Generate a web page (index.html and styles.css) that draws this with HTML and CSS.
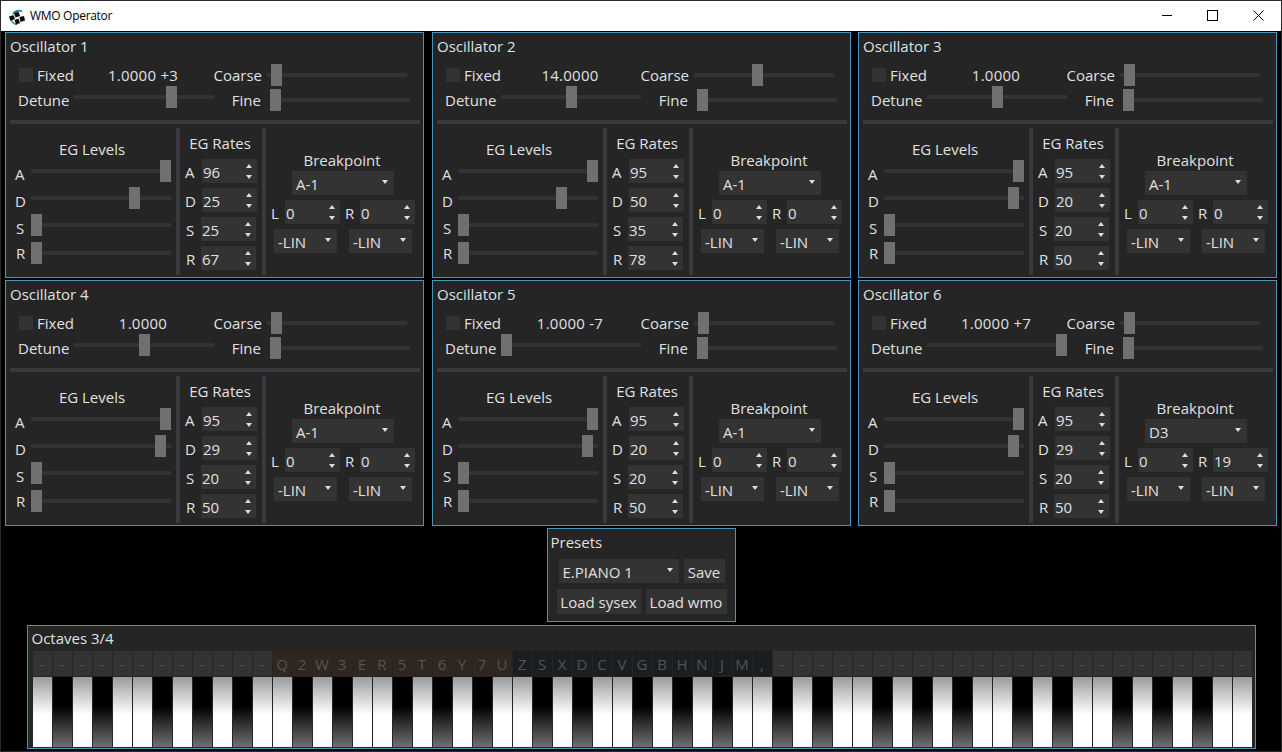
FILE: index.html
```html
<!DOCTYPE html>
<html lang="en">
<head>
<meta charset="utf-8">
<title>WMO Operator</title>
<link rel="stylesheet" href="styles.css">
</head>
<body>
<div class="app">
  <header class="titlebar">
    <svg class="logo" width="16" height="16" viewBox="0 0 16 16"><path d="M4 5A6.500 6.500 0 0 1 13 2.500" fill="none" stroke="#2f7fb5" stroke-width="1.800"/><path d="M2.500 11.500A6.500 6.500 0 0 0 8 15.500" fill="none" stroke="#2f7fb5" stroke-width="1.600"/><path d="M0 7.500l4.500-1.500 1.500 4-4.500 2zM5 4l4.500-1.500 1.500 4.500-4.500 1.500zM10.500 8l4.500-1 1 4.500-4.500 1.500zM5.500 11l4-1.500 1.500 4.500-4 1.500z" fill="#0c0c0c"/></svg>
    <span class="apptitle">WMO Operator</span>
    <div class="winbtns">
      <div class="winbtn"><svg width="11" height="11" viewBox="0 0 11 11"><path d="M1 5.500h10" stroke="#000"/></svg></div>
      <div class="winbtn"><svg width="11" height="11" viewBox="0 0 11 11"><rect x=".5" y=".5" width="10" height="10" fill="none" stroke="#000"/></svg></div>
      <div class="winbtn"><svg width="11" height="11" viewBox="0 0 11 11"><path d="M.5 .5l10 10M10.500 .5l-10 10" stroke="#000"/></svg></div>
    </div>
  </header>
  <main class="main">
    <section class="oscs">

      <div class="panel osc">
        <div class="ptitle">Oscillator 1</div>
        <div class="row r1"><i class="cb"></i><span class="fixed">Fixed</span><span class="val">1.0000 +3</span><span class="lc">Coarse</span><div class="sl ml5"><b class="th" style="left:4px"></b></div></div>
        <div class="row r2"><span class="ld">Detune</span><div class="sl ml6"><b class="th" style="left:92px"></b></div><span class="lf">Fine</span><div class="sl sf"><b class="th" style="left:0"></b></div></div>
        <div class="hsep"></div>
        <div class="lower">
          <div class="levels">
            <div class="ltitle">EG Levels</div>
            <div class="lv"><span class="ll">A</span><div class="sl"><b class="th" style="left:129px"></b></div></div>
            <div class="lv"><span class="ll">D</span><div class="sl"><b class="th" style="left:98px"></b></div></div>
            <div class="lv"><span class="ll sx">S</span><div class="sl"><b class="th" style="left:0"></b></div></div>
            <div class="lv lr"><span class="ll sx">R</span><div class="sl"><b class="th" style="left:0"></b></div></div>
          </div>
          <div class="vsep"></div>
          <div class="rates">
            <div class="rtitle">EG Rates</div>
            <div class="rr"><span class="rl">A</span><div class="spin"><span>96</span></div></div>
            <div class="rr"><span class="rl">D</span><div class="spin"><span>25</span></div></div>
            <div class="rr"><span class="rl rn">S</span><div class="spin"><span>25</span></div></div>
            <div class="rr"><span class="rl rn">R</span><div class="spin"><span>67</span></div></div>
          </div>
          <div class="vsep"></div>
          <div class="bp">
            <div class="btitle">Breakpoint</div>
            <div class="combo cnote"><span>A-1</span></div>
            <div class="bl"><span class="bll">L</span><div class="spin"><span>0</span></div><span class="blr">R</span><div class="spin"><span>0</span></div></div>
            <div class="bc"><div class="combo clin"><span>-LIN</span></div><div class="combo clin"><span>-LIN</span></div></div>
          </div>
        </div>
      </div>

      <div class="panel osc">
        <div class="ptitle">Oscillator 2</div>
        <div class="row r1"><i class="cb"></i><span class="fixed">Fixed</span><span class="val">14.0000</span><span class="lc">Coarse</span><div class="sl ml5"><b class="th" style="left:58px"></b></div></div>
        <div class="row r2"><span class="ld">Detune</span><div class="sl ml6"><b class="th" style="left:65px"></b></div><span class="lf">Fine</span><div class="sl sf"><b class="th" style="left:0"></b></div></div>
        <div class="hsep"></div>
        <div class="lower">
          <div class="levels">
            <div class="ltitle">EG Levels</div>
            <div class="lv"><span class="ll">A</span><div class="sl"><b class="th" style="left:129px"></b></div></div>
            <div class="lv"><span class="ll">D</span><div class="sl"><b class="th" style="left:98px"></b></div></div>
            <div class="lv"><span class="ll sx">S</span><div class="sl"><b class="th" style="left:0"></b></div></div>
            <div class="lv lr"><span class="ll sx">R</span><div class="sl"><b class="th" style="left:0"></b></div></div>
          </div>
          <div class="vsep"></div>
          <div class="rates">
            <div class="rtitle">EG Rates</div>
            <div class="rr"><span class="rl">A</span><div class="spin"><span>95</span></div></div>
            <div class="rr"><span class="rl">D</span><div class="spin"><span>50</span></div></div>
            <div class="rr"><span class="rl rn">S</span><div class="spin"><span>35</span></div></div>
            <div class="rr"><span class="rl rn">R</span><div class="spin"><span>78</span></div></div>
          </div>
          <div class="vsep"></div>
          <div class="bp">
            <div class="btitle">Breakpoint</div>
            <div class="combo cnote"><span>A-1</span></div>
            <div class="bl"><span class="bll">L</span><div class="spin"><span>0</span></div><span class="blr">R</span><div class="spin"><span>0</span></div></div>
            <div class="bc"><div class="combo clin"><span>-LIN</span></div><div class="combo clin"><span>-LIN</span></div></div>
          </div>
        </div>
      </div>

      <div class="panel osc">
        <div class="ptitle">Oscillator 3</div>
        <div class="row r1"><i class="cb"></i><span class="fixed">Fixed</span><span class="val">1.0000</span><span class="lc">Coarse</span><div class="sl ml5"><b class="th" style="left:4px"></b></div></div>
        <div class="row r2"><span class="ld">Detune</span><div class="sl ml6"><b class="th" style="left:65px"></b></div><span class="lf">Fine</span><div class="sl sf"><b class="th" style="left:0"></b></div></div>
        <div class="hsep"></div>
        <div class="lower">
          <div class="levels">
            <div class="ltitle">EG Levels</div>
            <div class="lv"><span class="ll">A</span><div class="sl"><b class="th" style="left:129px"></b></div></div>
            <div class="lv"><span class="ll">D</span><div class="sl"><b class="th" style="left:124px"></b></div></div>
            <div class="lv"><span class="ll sx">S</span><div class="sl"><b class="th" style="left:0"></b></div></div>
            <div class="lv lr"><span class="ll sx">R</span><div class="sl"><b class="th" style="left:0"></b></div></div>
          </div>
          <div class="vsep"></div>
          <div class="rates">
            <div class="rtitle">EG Rates</div>
            <div class="rr"><span class="rl">A</span><div class="spin"><span>95</span></div></div>
            <div class="rr"><span class="rl">D</span><div class="spin"><span>20</span></div></div>
            <div class="rr"><span class="rl rn">S</span><div class="spin"><span>20</span></div></div>
            <div class="rr"><span class="rl rn">R</span><div class="spin"><span>50</span></div></div>
          </div>
          <div class="vsep"></div>
          <div class="bp">
            <div class="btitle">Breakpoint</div>
            <div class="combo cnote"><span>A-1</span></div>
            <div class="bl"><span class="bll">L</span><div class="spin"><span>0</span></div><span class="blr">R</span><div class="spin"><span>0</span></div></div>
            <div class="bc"><div class="combo clin"><span>-LIN</span></div><div class="combo clin"><span>-LIN</span></div></div>
          </div>
        </div>
      </div>

      <div class="panel osc">
        <div class="ptitle">Oscillator 4</div>
        <div class="row r1"><i class="cb"></i><span class="fixed">Fixed</span><span class="val">1.0000</span><span class="lc">Coarse</span><div class="sl ml5"><b class="th" style="left:4px"></b></div></div>
        <div class="row r2"><span class="ld">Detune</span><div class="sl ml6"><b class="th" style="left:65px"></b></div><span class="lf">Fine</span><div class="sl sf"><b class="th" style="left:0"></b></div></div>
        <div class="hsep"></div>
        <div class="lower">
          <div class="levels">
            <div class="ltitle">EG Levels</div>
            <div class="lv"><span class="ll">A</span><div class="sl"><b class="th" style="left:129px"></b></div></div>
            <div class="lv"><span class="ll">D</span><div class="sl"><b class="th" style="left:124px"></b></div></div>
            <div class="lv"><span class="ll sx">S</span><div class="sl"><b class="th" style="left:0"></b></div></div>
            <div class="lv lr"><span class="ll sx">R</span><div class="sl"><b class="th" style="left:0"></b></div></div>
          </div>
          <div class="vsep"></div>
          <div class="rates">
            <div class="rtitle">EG Rates</div>
            <div class="rr"><span class="rl">A</span><div class="spin"><span>95</span></div></div>
            <div class="rr"><span class="rl">D</span><div class="spin"><span>29</span></div></div>
            <div class="rr"><span class="rl rn">S</span><div class="spin"><span>20</span></div></div>
            <div class="rr"><span class="rl rn">R</span><div class="spin"><span>50</span></div></div>
          </div>
          <div class="vsep"></div>
          <div class="bp">
            <div class="btitle">Breakpoint</div>
            <div class="combo cnote"><span>A-1</span></div>
            <div class="bl"><span class="bll">L</span><div class="spin"><span>0</span></div><span class="blr">R</span><div class="spin"><span>0</span></div></div>
            <div class="bc"><div class="combo clin"><span>-LIN</span></div><div class="combo clin"><span>-LIN</span></div></div>
          </div>
        </div>
      </div>

      <div class="panel osc">
        <div class="ptitle">Oscillator 5</div>
        <div class="row r1"><i class="cb"></i><span class="fixed">Fixed</span><span class="val">1.0000 -7</span><span class="lc">Coarse</span><div class="sl ml5"><b class="th" style="left:4px"></b></div></div>
        <div class="row r2"><span class="ld">Detune</span><div class="sl ml6"><b class="th" style="left:0"></b></div><span class="lf">Fine</span><div class="sl sf"><b class="th" style="left:0"></b></div></div>
        <div class="hsep"></div>
        <div class="lower">
          <div class="levels">
            <div class="ltitle">EG Levels</div>
            <div class="lv"><span class="ll">A</span><div class="sl"><b class="th" style="left:129px"></b></div></div>
            <div class="lv"><span class="ll">D</span><div class="sl"><b class="th" style="left:124px"></b></div></div>
            <div class="lv"><span class="ll sx">S</span><div class="sl"><b class="th" style="left:0"></b></div></div>
            <div class="lv lr"><span class="ll sx">R</span><div class="sl"><b class="th" style="left:0"></b></div></div>
          </div>
          <div class="vsep"></div>
          <div class="rates">
            <div class="rtitle">EG Rates</div>
            <div class="rr"><span class="rl">A</span><div class="spin"><span>95</span></div></div>
            <div class="rr"><span class="rl">D</span><div class="spin"><span>20</span></div></div>
            <div class="rr"><span class="rl rn">S</span><div class="spin"><span>20</span></div></div>
            <div class="rr"><span class="rl rn">R</span><div class="spin"><span>50</span></div></div>
          </div>
          <div class="vsep"></div>
          <div class="bp">
            <div class="btitle">Breakpoint</div>
            <div class="combo cnote"><span>A-1</span></div>
            <div class="bl"><span class="bll">L</span><div class="spin"><span>0</span></div><span class="blr">R</span><div class="spin"><span>0</span></div></div>
            <div class="bc"><div class="combo clin"><span>-LIN</span></div><div class="combo clin"><span>-LIN</span></div></div>
          </div>
        </div>
      </div>

      <div class="panel osc">
        <div class="ptitle">Oscillator 6</div>
        <div class="row r1"><i class="cb"></i><span class="fixed">Fixed</span><span class="val">1.0000 +7</span><span class="lc">Coarse</span><div class="sl ml5"><b class="th" style="left:4px"></b></div></div>
        <div class="row r2"><span class="ld">Detune</span><div class="sl ml6"><b class="th" style="left:129px"></b></div><span class="lf">Fine</span><div class="sl sf"><b class="th" style="left:0"></b></div></div>
        <div class="hsep"></div>
        <div class="lower">
          <div class="levels">
            <div class="ltitle">EG Levels</div>
            <div class="lv"><span class="ll">A</span><div class="sl"><b class="th" style="left:129px"></b></div></div>
            <div class="lv"><span class="ll">D</span><div class="sl"><b class="th" style="left:124px"></b></div></div>
            <div class="lv"><span class="ll sx">S</span><div class="sl"><b class="th" style="left:0"></b></div></div>
            <div class="lv lr"><span class="ll sx">R</span><div class="sl"><b class="th" style="left:0"></b></div></div>
          </div>
          <div class="vsep"></div>
          <div class="rates">
            <div class="rtitle">EG Rates</div>
            <div class="rr"><span class="rl">A</span><div class="spin"><span>95</span></div></div>
            <div class="rr"><span class="rl">D</span><div class="spin"><span>29</span></div></div>
            <div class="rr"><span class="rl rn">S</span><div class="spin"><span>20</span></div></div>
            <div class="rr"><span class="rl rn">R</span><div class="spin"><span>50</span></div></div>
          </div>
          <div class="vsep"></div>
          <div class="bp">
            <div class="btitle">Breakpoint</div>
            <div class="combo cnote"><span>D3</span></div>
            <div class="bl"><span class="bll">L</span><div class="spin"><span>0</span></div><span class="blr">R</span><div class="spin"><span>19</span></div></div>
            <div class="bc"><div class="combo clin"><span>-LIN</span></div><div class="combo clin"><span>-LIN</span></div></div>
          </div>
        </div>
      </div>

    </section>

    <section class="panel presets">
      <div class="ptitle">Presets</div>
      <div class="prow1"><div class="combo cpreset"><span>E.PIANO 1</span></div><div class="btn bsave">Save</div></div>
      <div class="prow2"><div class="btn bsys">Load sysex</div><div class="btn bwmo">Load wmo</div></div>
    </section>

    <section class="panel kbd">
      <div class="ptitle">Octaves 3/4</div>
      <div class="keys">
        <div class="key w"><span>-</span></div><div class="key b"><span>-</span></div><div class="key w"><span>-</span></div><div class="key b"><span>-</span></div><div class="key w"><span>-</span></div><div class="key w"><span>-</span></div><div class="key b"><span>-</span></div><div class="key w"><span>-</span></div><div class="key b"><span>-</span></div><div class="key w"><span>-</span></div><div class="key b"><span>-</span></div><div class="key w"><span>-</span></div>
        <div class="key w lo"><span>Q</span></div><div class="key b lo"><span>2</span></div><div class="key w lo"><span>W</span></div><div class="key b lo"><span>3</span></div><div class="key w lo"><span>E</span></div><div class="key w lo"><span>R</span></div><div class="key b lo"><span>5</span></div><div class="key w lo"><span>T</span></div><div class="key b lo"><span>6</span></div><div class="key w lo"><span>Y</span></div><div class="key b lo"><span>7</span></div><div class="key w lo"><span>U</span></div>
        <div class="key w hi"><span>Z</span></div><div class="key b hi"><span>S</span></div><div class="key w hi"><span>X</span></div><div class="key b hi"><span>D</span></div><div class="key w hi"><span>C</span></div><div class="key w hi"><span>V</span></div><div class="key b hi"><span>G</span></div><div class="key w hi"><span>B</span></div><div class="key b hi"><span>H</span></div><div class="key w hi"><span>N</span></div><div class="key b hi"><span>J</span></div><div class="key w hi"><span>M</span></div><div class="key w hi"><span>,</span></div>
        <div class="key b"><span>-</span></div><div class="key w"><span>-</span></div><div class="key b"><span>-</span></div><div class="key w"><span>-</span></div><div class="key w"><span>-</span></div><div class="key b"><span>-</span></div><div class="key w"><span>-</span></div><div class="key b"><span>-</span></div><div class="key w"><span>-</span></div><div class="key b"><span>-</span></div><div class="key w"><span>-</span></div>
        <div class="key w"><span>-</span></div><div class="key b"><span>-</span></div><div class="key w"><span>-</span></div><div class="key b"><span>-</span></div><div class="key w"><span>-</span></div><div class="key w"><span>-</span></div><div class="key b"><span>-</span></div><div class="key w"><span>-</span></div><div class="key b"><span>-</span></div><div class="key w"><span>-</span></div><div class="key b"><span>-</span></div><div class="key w"><span>-</span></div>
        <div class="key w"><span>-</span></div>
      </div>
    </section>
  </main>
</div>
</body>
</html>
```

FILE: styles.css
```css
* { box-sizing: border-box; }
html, body { margin: 0; padding: 0; background: #000; }
body { font: 15px/20px "Open Sans", sans-serif; color: #e0e0e0; }

.app { width: 1282px; height: 752px; border: 1px solid #2b2b2b; overflow: hidden; background: #000; display: flex; flex-direction: column; }

.titlebar { height: 30px; flex: none; background: #fff; display: flex; align-items: center; padding-left: 8px; color: #000; }
.logo { flex: none; margin-top: 1px; }
.apptitle { font: 12px/16px "Open Sans", sans-serif; letter-spacing: -.3px; margin-left: 5px; }
.winbtns { margin-left: auto; display: flex; }
.winbtn { width: 46px; height: 30px; padding: 9px 0 0 18px; }
.winbtn svg { display: block; }

.main { flex: 1; display: flex; flex-direction: column; padding-top: 1px; }

.panel { background: #252525; border: 1px solid #4a94c0; }
.oscs { display: grid; grid-template-columns: 427px 426px 419px; grid-auto-rows: 246px; row-gap: 2px; padding-left: 4px; }
.osc { width: 419px; padding: 0 3px 0 4px; }
.ptitle { height: 25px; line-height: 25px; }
.osc .ptitle { height: 31px; line-height: 27px; }

.row { display: flex; align-items: flex-start; height: 22px; }
.r2 { height: 25px; }
.cb { width: 14px; height: 14px; margin: 4px 0 0 9px; background: #333; flex: none; }
.fixed { margin-left: 4px; width: 46px; line-height: 22px; flex: none; }
.val { width: 120px; text-align: center; line-height: 22px; letter-spacing: .25px; flex: none; }
.lc { width: 59px; text-align: right; line-height: 22px; flex: none; }
.ld { width: 58px; padding-left: 8px; line-height: 28px; flex: none; }
.lf { width: 47px; text-align: right; line-height: 28px; flex: none; }

.sl { position: relative; width: 140px; height: 22px; flex: none; }
.sl::before { content: ""; position: absolute; left: 0; right: 0; top: 9px; height: 4px; background: #333; }
.th { position: absolute; top: 0; width: 11px; height: 22px; background: #707070; }
.ml6 { margin-left: 6px; }
.ml5 { margin-left: 5px; }
.sf { margin: 3px 0 0 9px; }

.hsep { height: 4px; margin: 9px 0 4px; background: #3a3a3e; }

.lower { display: grid; grid-template-columns: 166px 4px 82px 4px 154px; height: 145px; }
.vsep { background: #3a3a3e; }

.levels { padding-top: 11px; }
.ltitle { text-align: center; padding-right: 2px; height: 21px; }
.lv { display: flex; height: 27px; }
.lr { margin-top: 1px; }
.ll { width: 21px; padding-left: 5px; line-height: 28px; flex: none; }
.sx { padding-left: 6px; }
.lr .ll { line-height: 22px; }

.rates { padding-top: 5px; }
.rtitle { text-align: center; padding-right: 2px; height: 26px; }
.rr { display: flex; height: 24px; margin-bottom: 5px; padding-left: 5px; line-height: 26px; }
.rl { width: 17px; flex: none; }
.rn { width: 16px; padding-left: 1px; }

.spin { position: relative; width: 55px; height: 24px; background: #333; padding-left: 1px; line-height: 26px; flex: none; }
.spin::before, .spin::after { content: ""; position: absolute; right: 5px; border-left: 3.500px solid transparent; border-right: 3.500px solid transparent; }
.spin::before { top: 5px; border-bottom: 4px solid #ddd; }
.spin::after { top: 16px; border-top: 4px solid #ddd; }

.bp { padding-top: 22px; }
.btitle { text-align: center; padding-right: 2px; height: 21px; }
.combo { position: relative; height: 24px; background: #333; padding-left: 4px; line-height: 26px; }
.combo::after { content: ""; position: absolute; right: 6px; top: 9px; border-left: 3.500px solid transparent; border-right: 3.500px solid transparent; border-top: 4px solid #ddd; }
.cnote { width: 102px; margin-left: 26px; }
.bl { display: flex; height: 24px; margin-top: 5px; padding-left: 5px; line-height: 26px; }
.bll { width: 14px; flex: none; }
.blr { width: 20px; padding-left: 5px; flex: none; }
.bc { display: flex; gap: 12px; margin-top: 5px; padding-left: 8px; }
.clin { width: 63px; }

.presets { width: 189px; height: 94px; margin: 2px auto 0; padding: 0 3px; }
.presets .ptitle { height: 30px; line-height: 27px; }
.prow1 { display: flex; margin-left: 8px; gap: 5px; }
.cpreset { width: 120px; }
.btn { height: 25px; background: #333; text-align: center; line-height: 27px; }
.bsave { width: 41px; height: 24px; line-height: 26px; }
.prow2 { display: flex; margin: 6px 0 0 6px; gap: 5px; }
.bsys { width: 84px; }
.bwmo { width: 81px; }

.kbd { width: 1229px; height: 124px; margin: 3px auto 0; padding: 0 4px 0 5px; }
.kbd .ptitle { margin-left: -1px; }
.keys { display: grid; grid-template-columns: repeat(61, 20px); }
.key { width: 19px; height: 96px; display: flex; flex-direction: column; }
.key span { height: 25px; background: #333; color: #555; text-align: center; line-height: 26px; margin-bottom: 1px; flex: none; }
.key::after { content: ""; flex: 1; }
.key.w::after { background: linear-gradient(#9c9c9c, #fff 54%); }
.key.b::after { background: linear-gradient(#000 42%, #707070); }
.key.lo span { background: #2d2621; color: #59534e; }
.key.hi span { background: #1b1e20; color: #4f5356; }
```
